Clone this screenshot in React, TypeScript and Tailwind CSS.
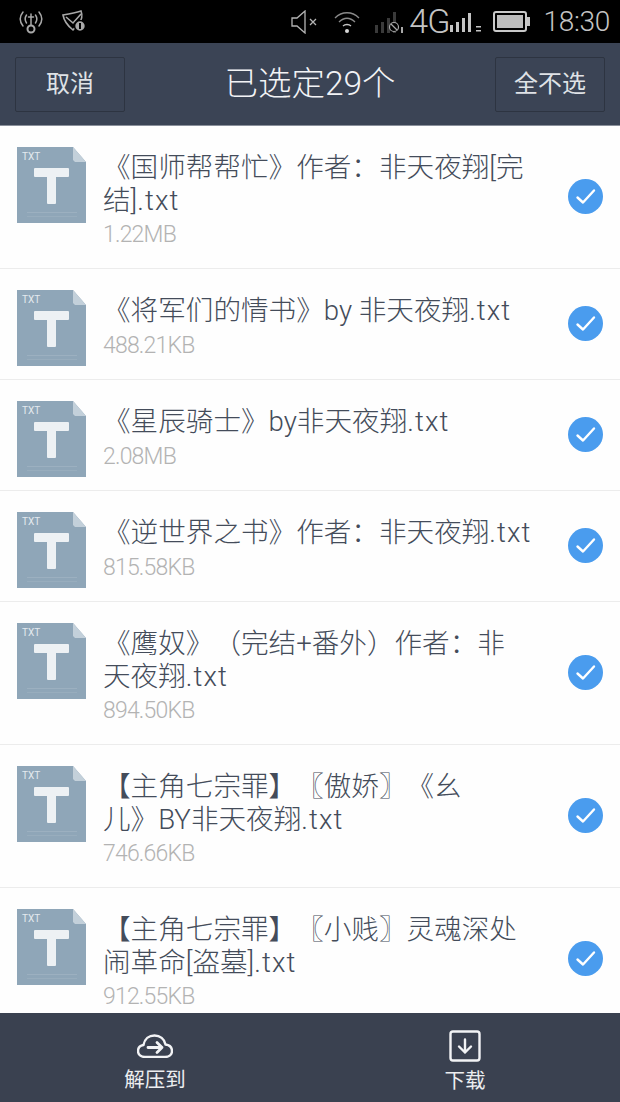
import React from 'react';

const FONT = "font-['Roboto','Noto_Sans_CJK_SC',sans-serif]";

const files = [
  { lines: ['《国师帮帮忙》作者：非天夜翔[完', '结].txt'], size: '1.22MB' },
  { lines: ['《将军们的情书》by 非天夜翔.txt'], size: '488.21KB' },
  { lines: ['《星辰骑士》by非天夜翔.txt'], size: '2.08MB' },
  { lines: ['《逆世界之书》作者：非天夜翔.txt'], size: '815.58KB' },
  { lines: ['《鹰奴》（完结+番外）作者：非', '天夜翔.txt'], size: '894.50KB' },
  { lines: ['【主角七宗罪】〖傲娇〗《幺', '儿》BY非天夜翔.txt'], size: '746.66KB' },
  { lines: ['【主角七宗罪】〖小贱〗灵魂深处', '闹革命[盗墓].txt'], size: '912.55KB' },
];

const FileIcon = () => (
  <div className="relative w-[69px] h-[76px] shrink-0 mt-[21px]">
    <svg width="69" height="76" viewBox="0 0 69 76" className="block">
      <path d="M0 0H56L69 15V76H0Z" fill="#8fa6b8" />
      <path d="M56 0L69 15H58L56 13Z" fill="#c3d0da" />
      <rect x="17" y="21" width="35" height="9" rx="1" fill="#edf1f4" />
      <rect x="30" y="28" width="9" height="29" rx="1" fill="#edf1f4" />
      <rect x="10" y="65" width="50" height="1" fill="#9cb0c0" />
      <rect x="10" y="69" width="50" height="1" fill="#98adbd" />
    </svg>
    <span className="absolute left-[5px] top-[4px] text-[10px] leading-[12px] text-[#e4eaef]">TXT</span>
  </div>
);

const CheckBadge = () => (
  <svg width="35" height="35" viewBox="0 0 35 35" className="shrink-0">
    <circle cx="17.5" cy="17.5" r="17.5" fill="#4a9cee" />
    <path d="M9.5 18.5L15 23.5L26 11.5" fill="none" stroke="#fff" strokeWidth="2.4" strokeLinecap="round" strokeLinejoin="round" />
  </svg>
);

const StatusBar = () => (
  <div className="h-[43px] bg-black shrink-0 flex items-center pl-[19px] pr-[10px] text-[#c4c4c4]">
    <svg width="24" height="24" viewBox="0 0 24 24" fill="none" stroke="#a8a8a8" strokeWidth="1.5" strokeLinecap="round">
      <path d="M4 2C0 7 0 11 4 16M20 2C24 7 24 11 20 16M7.5 5C5.5 8 5.5 10 7.5 13M16.5 5C18.500 8 18.500 10 16.500 13" />
      <path d="M12 4V15M9.500 7H14.500" />
      <circle cx="12" cy="19" r="3.500" strokeWidth="2" />
    </svg>
    <svg width="24" height="23" viewBox="0 0 24 23" fill="none" stroke="#a8a8a8" strokeWidth="1.600" className="ml-[19px]">
      <path d="M1 5C7 4 13 3 19 1C21 6 20 10 16 14L11 20C6 16 2 11 1 5Z" />
      <path d="M4 7L11 13L19 4" />
      <circle cx="18" cy="16" r="5.500" fill="#a8a8a8" stroke="#000" />
      <rect x="17" y="13" width="2" height="6" fill="#000" stroke="none" />
    </svg>
    <div className="flex-1" />
    <svg width="30" height="24" viewBox="0 0 30 24" fill="none" stroke="#b4b4b4" strokeWidth="1.300">
      <path d="M1 8H6L14 1V23L6 16H1Z" />
      <path d="M19 9L25 15M25 9L19 15" />
    </svg>
    <svg width="26" height="24" viewBox="0 0 26 24" fill="none" stroke="#8a8a8a" strokeWidth="1.300" className="ml-[13px]">
      <path d="M1 8C8 1 18 1 25 8M5 12C10 7 16 7 21 12" />
      <path d="M9 16C11 14 15 14 17 16" stroke="#c4c4c4" />
      <circle cx="13" cy="21" r="2" fill="#d8d8d8" stroke="none" />
    </svg>
    <svg width="32" height="24" viewBox="0 0 32 24" className="ml-[15px]">
      <rect x="0" y="15" width="3" height="8" fill="#3a3a3a" />
      <rect x="6" y="12" width="3" height="11" fill="#3a3a3a" />
      <rect x="12" y="8" width="3" height="15" fill="#3a3a3a" />
      <rect x="18" y="2" width="3" height="21" fill="#3a3a3a" />
      <circle cx="19" cy="17" r="4.500" fill="#000" stroke="#a8a8a8" strokeWidth="1.200" />
      <path d="M16 14L22 20" stroke="#a8a8a8" strokeWidth="1.200" />
      <rect x="26" y="17" width="2" height="6" fill="#a8a8a8" />
    </svg>
    <span className={`${FONT} font-light text-[34px] leading-[43px] ml-[2px] tracking-[-1px] text-[#c4c4c4]`}>4G</span>
    <svg width="33" height="24" viewBox="0 0 33 24" className="ml-[1px]">
      <rect x="0" y="15" width="3" height="7" fill="#c4c4c4" />
      <rect x="6" y="12" width="3" height="10" fill="#c4c4c4" />
      <rect x="12" y="8" width="3" height="14" fill="#c4c4c4" />
      <rect x="18" y="3" width="3" height="19" fill="#c4c4c4" />
      <rect x="26" y="16" width="5" height="1.500" fill="#c4c4c4" />
      <rect x="26" y="20" width="5" height="1.500" fill="#c4c4c4" />
    </svg>
    <svg width="37" height="21" viewBox="0 0 37 21" className="ml-[10px]">
      <rect x="1" y="1" width="32" height="19" rx="2" fill="#000" stroke="#c9c9c9" strokeWidth="2" />
      <rect x="4" y="4" width="26" height="13" fill="#bdbdbd" />
      <rect x="34" y="6" width="3" height="9" fill="#c4c4c4" />
    </svg>
    <span className={`${FONT} font-light text-[28px] leading-[43px] ml-[13px] tracking-[-0.3px] text-[#c4c4c4]`}>18:30</span>
  </div>
);

const HeaderButton = ({ children }: { children: React.ReactNode }) => (
  <button className="w-[110px] h-[55px] rounded-[2px] border border-[#2d3441] text-[24px] text-[#dfe2e6] flex items-center justify-center">
    {children}
  </button>
);

// the extension reads a little wider than the rest of the latin text
const FileLine = ({ text }: { text: string }) => {
  const parts = text.split('.txt');
  if (parts.length === 1) return <>{text}</>;
  return (
    <>
      {parts[0]}
      <span className="tracking-[1.1px]">.txt</span>
    </>
  );
};

export default function App() {
  return (
    <div className={`${FONT} w-[620px] h-[1102px] flex flex-col overflow-hidden bg-white`}>
      <StatusBar />

      {/* Title bar */}
      <div className="h-[83px] shrink-0 bg-[#3b4455] border-b border-[#8a909b] flex items-center justify-between px-[15px]">
        <HeaderButton>取消</HeaderButton>
        <h1 className="text-[33.5px] font-light text-[#f2f3f5] [text-spacing-trim:space-all]">已选定29个</h1>
        <HeaderButton>全不选</HeaderButton>
      </div>

      {/* File list */}
      <div className="flex-1 min-h-0 overflow-hidden">
        {files.map((file) => (
          <div key={file.size} className="flex items-start pl-[17px] pr-[17px] border-b border-[#ececec] bg-[#fefefe]">
            <FileIcon />
            <div className="flex-1 min-w-0 pl-[17px] pt-[26px] pb-[23px]">
              <div className="text-[27.6px] leading-[32px] font-light text-[#444c5a] whitespace-nowrap [text-spacing-trim:space-all]">
                {file.lines.map((line) => (
                  <div key={line} className="[&:nth-child(2)]:mt-[1px] [&:nth-child(2)]:-mb-[1px]">
                    <FileLine text={line} />
                  </div>
                ))}
              </div>
              <div className="mt-[9px] text-[23px] leading-[20px] font-light text-[#b3b3b3] tracking-[-0.8px]">{file.size}</div>
            </div>
            <div className="self-center mb-[2px]">
              <CheckBadge />
            </div>
          </div>
        ))}
      </div>

      {/* Bottom actions */}
      <div className="h-[89px] shrink-0 bg-[#3a4150] grid grid-cols-2 text-[#eceef0]">
        <button className="flex flex-col items-center pt-[21px]">
          <svg width="36" height="24" viewBox="0 0 36 24" fill="none" stroke="#f2f3f5" strokeWidth="2.4" strokeLinecap="round" strokeLinejoin="round">
            <path d="M8 23C4 23 1 20.500 1 17C1 13.500 3.500 11.500 6.500 11C7.500 5 12 1.500 17.500 1.500C23 1.500 27.500 5 28.500 10.500C32.500 11 35 13.500 35 17C35 20.500 32 23 28 23Z" />
            <path d="M11 13.500H25M20 8.500L25 13.500L20 18.500" strokeWidth="2.800" />
          </svg>
          <span className="text-[20.5px] leading-[26px] mt-[9px]">解压到</span>
        </button>
        <button className="flex flex-col items-center pt-[17px]">
          <svg width="32" height="32" viewBox="0 0 32 32" fill="none" stroke="#f2f3f5" strokeWidth="2.400" strokeLinecap="round" strokeLinejoin="round">
            <rect x="1.500" y="1.500" width="29" height="29" rx="2.500" />
            <path d="M16 9.500V22.500M10 16.500L16 22.500L22 16.500" />
          </svg>
          <span className="text-[20.5px] leading-[26px] mt-[6px]">下载</span>
        </button>
      </div>
    </div>
  );
}
